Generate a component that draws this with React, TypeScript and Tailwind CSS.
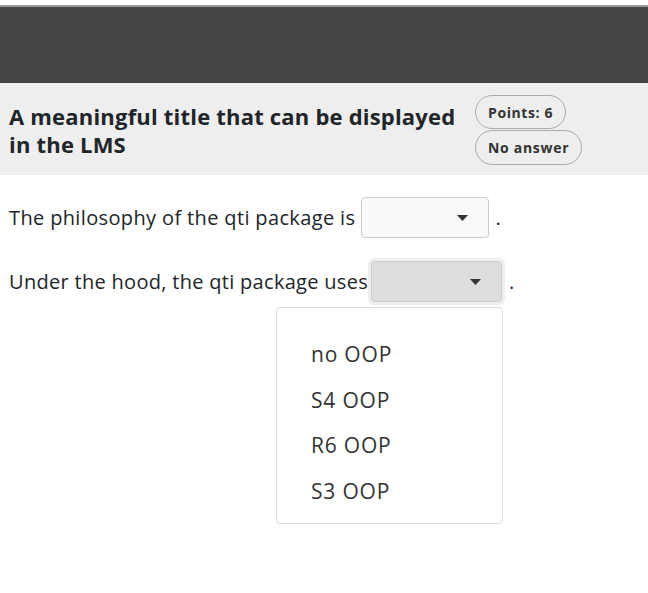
const OPTIONS = ['no OOP', 'S4 OOP', 'R6 OOP', 'S3 OOP']

function Caret() {
  return (
    <svg width="11" height="6" viewBox="0 0 11 6" className="shrink-0">
      <path d="M0 0 L11 0 L5.5 6 Z" fill="#333" />
    </svg>
  )
}

export default function App() {
  return (
    <div className="min-h-[593px] bg-white text-[#212529]" style={{ fontFamily: '"Open Sans", "Noto Sans", sans-serif' }}>
      <div className="h-[5px] bg-white" />
      <div className="h-[2px] bg-[#999999]" />
      <div className="h-[76px] bg-[#444444]" />

      {/* header */}
      <div className="flex items-start bg-[#eeeeee] h-[92px] pl-[9px] pt-[12px]">
        <h1 className="w-[460px] text-[22px] font-bold leading-[28px] tracking-[0.2px] pt-[7px]">
          A meaningful title that can be displayed in the LMS
        </h1>
        <div className="ml-[6px] flex flex-col items-start gap-[1px]">
          <span className="h-[34px] px-[12px] flex items-center rounded-full border border-[#aaaaaa] text-[14px] tracking-[0.6px] font-bold text-[#333]">
            Points: 6
          </span>
          <span className="h-[35px] px-[12px] flex items-center rounded-full border border-[#aaaaaa] text-[14px] tracking-[0.7px] font-bold text-[#333]">
            No answer
          </span>
        </div>
      </div>

      {/* body */}
      <div className="pl-[9px] pt-[22px] text-[20px] tracking-[0.36px]">
        <div className="flex items-center h-[41px]">
          <span>The philosophy of the qti package is</span>
          <div className="ml-[6px] w-[128px] h-[41px] rounded-[4px] border border-[#cccccc] bg-[#f8f9fa] flex items-center justify-end pr-[20px]">
            <Caret />
          </div>
          <span className="ml-[6px]">.</span>
        </div>

        <div className="relative flex items-center h-[41px] mt-[23px]">
          <span className="tracking-[0.3px]">Under the hood, the qti package uses</span>
          <div className="p-[3px] rounded-[6px] bg-[#eeeeee]">
            <div className="w-[131px] h-[41px] rounded-[4px] border border-[#cccccc] bg-[#dddddd] flex items-center justify-end pr-[20px]">
              <Caret />
            </div>
          </div>
          <span className="ml-[4px]">.</span>

          <div className="absolute left-[267px] top-[46px] w-[227px] h-[217px] rounded-[4px] border border-[#dddddd] bg-white pt-[24px]">
            {OPTIONS.map((o) => (
              <div key={o} className="h-[45.5px] flex items-center pl-[34px] text-[21px] tracking-[0.8px] text-[#333]">
                {o}
              </div>
            ))}
          </div>
        </div>
      </div>
    </div>
  )
}
